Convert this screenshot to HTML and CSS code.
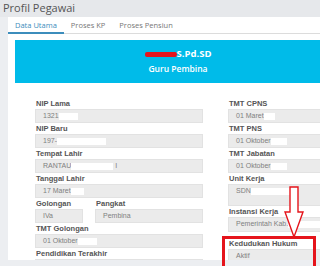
FILE: index.html
```html
<!DOCTYPE html>
<html lang="id">
<head>
  <meta charset="UTF-8">
  <meta name="viewport" content="width=device-width, initial-scale=1.0">
  <title>Profil Pegawai</title>
  <link rel="stylesheet" href="styles.css">
</head>
<body>
  <h1 class="page-title">Profil Pegawai</h1>
  <div class="panel">
    <ul class="tabs">
      <li class="tab active">Data Utama</li>
      <li class="tab">Proses KP</li>
      <li class="tab">Proses Pensiun</li>
    </ul>
    <div class="panel-body">
      <div class="banner">
        <div class="banner-name"><span class="scribble"></span>S.Pd.SD</div>
        <div class="banner-rank">Guru Pembina</div>
      </div>

      <div class="form">
        <div class="col">
          <div class="form-group">
            <label>NIP Lama</label>
            <div class="field">1321<span class="hide" style="width:19px"></span></div>
          </div>
          <div class="form-group">
            <label>NIP Baru</label>
            <div class="field">197-<span class="hide" style="width:49px"></span></div>
          </div>
          <div class="form-group">
            <label>Tempat Lahir</label>
            <div class="field">RANTAU<span class="hide" style="width:42px"></span>I</div>
          </div>
          <div class="form-group">
            <label>Tanggal Lahir</label>
            <div class="field">17 Maret<span class="hide" style="width:13px"></span></div>
          </div>
          <div class="form-row">
            <div class="form-group">
              <label>Golongan</label>
              <div class="field">IVa</div>
            </div>
            <div class="form-group">
              <label>Pangkat</label>
              <div class="field">Pembina</div>
            </div>
          </div>
          <div class="form-group">
            <label>TMT Golongan</label>
            <div class="field">01 Oktober<span class="hide" style="width:19px"></span></div>
          </div>
          <div class="form-group">
            <label>Pendidikan Terakhir</label>
            <div class="field"></div>
          </div>
        </div>

        <div class="col">
          <div class="form-group">
            <label>TMT CPNS</label>
            <div class="field">01 Maret<span class="hide" style="width:11px"></span></div>
          </div>
          <div class="form-group">
            <label>TMT PNS</label>
            <div class="field">01 Oktober<span class="hide" style="width:16px"></span></div>
          </div>
          <div class="form-group">
            <label>TMT Jabatan</label>
            <div class="field">01 Oktober<span class="hide" style="width:16px"></span></div>
          </div>
          <div class="form-group">
            <label>Unit Kerja</label>
            <div class="field tall">SDN<span class="hide" style="width:40px"></span></div>
          </div>
          <div class="form-group">
            <label>Instansi Kerja</label>
            <div class="field mid">Pemerintah Kab.<span class="hide" style="width:36px"></span></div>
          </div>
          <div class="form-group spaced">
            <label>Kedudukan Hukum</label>
            <div class="field">Aktif</div>
          </div>
        </div>
      </div>
    </div>
  </div>

  <svg class="arrow" width="22" height="54" viewBox="0 0 22 54">
    <path d="M7 1 H15 V26 H20 L11 51 L2 26 H7 Z" fill="#fff" stroke="#e5141b" stroke-width="1.4"/>
  </svg>
  <div class="highlight"></div>
</body>
</html>
```

FILE: styles.css
```css
body {
  margin: 0;
  width: 320px;
  height: 266px;
  overflow: hidden;
  position: relative;
  background-color: #eceef1;
  font-family: "Liberation Sans", Arial, sans-serif;
}
.page-title {
  margin: 0;
  height: 17px;
  padding-left: 3px;
  font-family: "Open Sans", sans-serif;
  font-size: 11px;
  font-weight: normal;
  line-height: 15px;
  color: #555;
  background-color: #e6e8eb;
}
.panel {
  margin-left: 8px;
  height: 243px;
  background-color: #fff;
  overflow: hidden;
}
.tabs {
  display: flex;
  margin: 0;
  padding: 0;
  list-style: none;
  height: 16px;
  border-bottom: 1px solid #dcdcdc;
}
.tab {
  padding: 0 7px;
  font-family: "Open Sans", sans-serif;
  font-size: 7.5px;
  line-height: 16px;
  color: #777;
}
.tab.active {
  color: #3c8dbc;
  border-bottom: 2px solid #3c8dbc;
  height: 15px;
}
.panel-body {
  padding: 6px 0 0 7px;
}
.banner {
  width: 326px;
  height: 43px;
  background-color: #00bbe9;
  color: #fff;
  text-align: center;
  font-family: "Open Sans", sans-serif;
}
.banner-name {
  padding-top: 8px;
  font-size: 9.5px;
  font-weight: bold;
  line-height: 12px;
}
.scribble {
  display: inline-block;
  width: 32px;
  height: 5px;
  vertical-align: middle;
  background-color: #e5141b;
  border-radius: 2px;
}
.banner-rank {
  margin-top: 3px;
  font-size: 8.5px;
  font-weight: 600;
  line-height: 11px;
}
.form {
  display: grid;
  grid-template-columns: 168px 168px;
  column-gap: 25px;
  padding: 15px 0 0 20px;
}
.form-row {
  display: grid;
  grid-template-columns: 48px 108px;
  column-gap: 12px;
}
.form-group label {
  display: block;
  height: 11px;
  font-size: 7.5px;
  font-weight: bold;
  line-height: 11px;
  color: #555;
  padding-left: 1px;
}
.field {
  height: 14px;
  background-color: #ebebeb;
  border: 1px solid #e2e2e2;
  box-sizing: border-box;
  padding-left: 7px;
  font-size: 7px;
  line-height: 12px;
  color: #808080;
  white-space: nowrap;
}
.field.tall {
  height: 22px;
}
.field.mid {
  height: 15px;
}
.form-group.spaced {
  margin-top: 6px;
}
.hide {
  display: inline-block;
  height: 7px;
  margin-right: 2px;
  vertical-align: middle;
  background-color: #fff;
}
.highlight {
  position: absolute;
  left: 222px;
  top: 236px;
  width: 94px;
  height: 34px;
  box-sizing: border-box;
  border: 3px solid #e5141b;
}
.arrow {
  position: absolute;
  left: 283px;
  top: 186px;
}
```
